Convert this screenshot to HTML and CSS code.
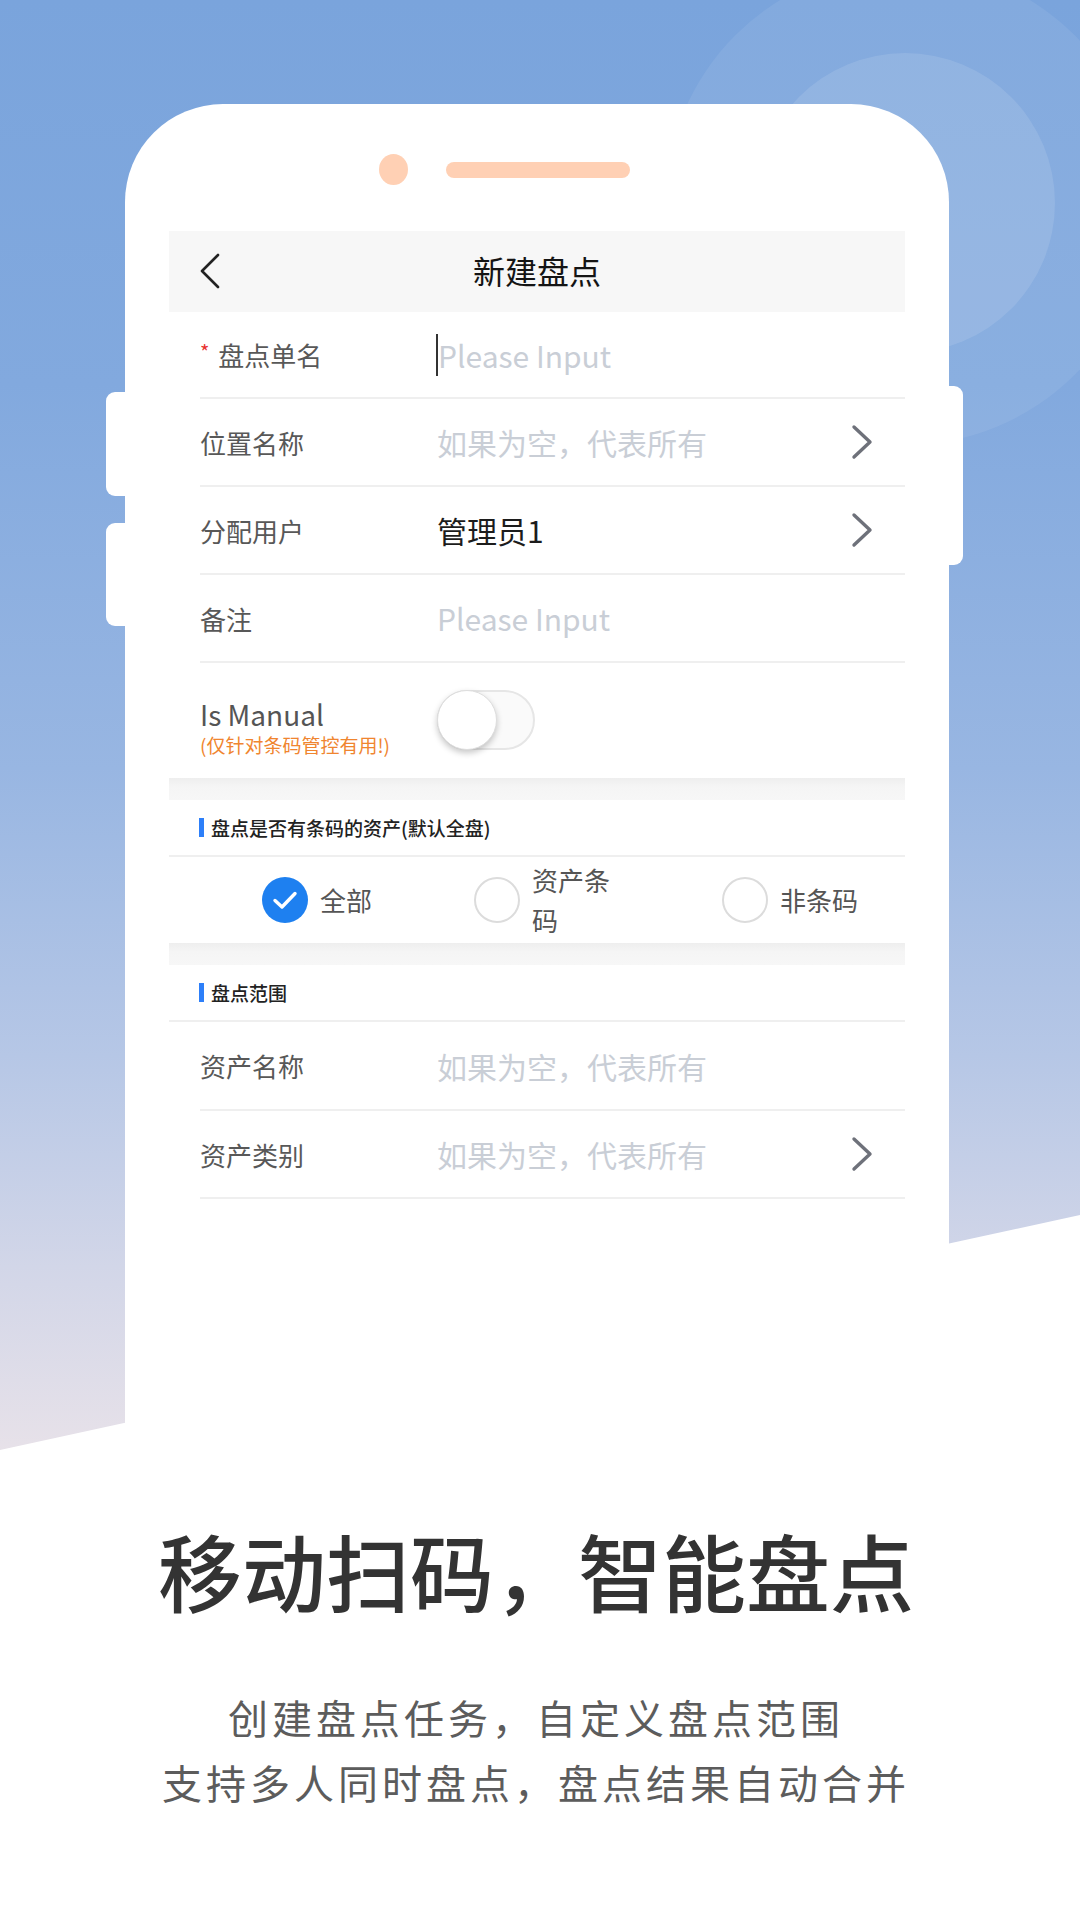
FILE: index.html
```html
<!DOCTYPE html>
<html lang="zh-CN">
<head>
<meta charset="utf-8">
<title>新建盘点</title>
<link rel="stylesheet" href="styles.css">
</head>
<body>
<div class="page">
  <div class="bg-circle outer"></div>
  <div class="bg-circle inner"></div>
  <div class="bg-white"></div>

  <div class="phone">
    <span class="side-btn left one"></span>
    <span class="side-btn left two"></span>
    <span class="side-btn right"></span>

    <div class="notch"><span class="cam"></span><span class="speaker"></span></div>

    <div class="screen">
      <div class="nav">
        <svg class="back" viewBox="0 0 22 36" width="22" height="36"><path d="M19 2 L3 18 L19 34" fill="none" stroke="#222" stroke-width="2.6" stroke-linecap="round" stroke-linejoin="round"/></svg>
        <div class="nav-title">新建盘点</div>
        <span></span>
      </div>

      <div class="row first">
        <div class="label"><span class="req">*</span>盘点单名</div>
        <div class="value placeholder"><span class="cursor"></span>Please Input</div>
      </div>
      <div class="row">
        <div class="label">位置名称</div>
        <div class="value placeholder">如果为空，代表所有</div>
        <svg class="chev" viewBox="0 0 24 38" width="24" height="38"><path d="M4 4 L20 19 L4 34" fill="none" stroke="#6E717A" stroke-width="3.4" stroke-linecap="round" stroke-linejoin="round"/></svg>
      </div>
      <div class="row">
        <div class="label">分配用户</div>
        <div class="value">管理员1</div>
        <svg class="chev" viewBox="0 0 24 38" width="24" height="38"><path d="M4 4 L20 19 L4 34" fill="none" stroke="#6E717A" stroke-width="3.4" stroke-linecap="round" stroke-linejoin="round"/></svg>
      </div>
      <div class="row">
        <div class="label">备注</div>
        <div class="value placeholder">Please Input</div>
      </div>
      <div class="row manual">
        <div class="label-block">
          <div class="label-en">Is Manual</div>
          <div class="label-note">(仅针对条码管控有用!)</div>
        </div>
        <div class="toggle"><span class="knob"></span></div>
      </div>

      <div class="band"></div>
      <div class="section-head"><span class="bar"></span>盘点是否有条码的资产(默认全盘)</div>
      <div class="radios">
        <div class="radio">
          <span class="dot checked"><svg viewBox="0 0 46 46" width="46" height="46"><path d="M13 23.5 L20 30 L33 16.5" fill="none" stroke="#fff" stroke-width="3.4" stroke-linecap="round" stroke-linejoin="round"/></svg></span>
          <span class="radio-text">全部</span>
        </div>
        <div class="radio">
          <span class="dot"></span>
          <span class="radio-text narrow">资产条码</span>
        </div>
        <div class="radio">
          <span class="dot"></span>
          <span class="radio-text">非条码</span>
        </div>
      </div>
      <div class="band"></div>
      <div class="section-head"><span class="bar"></span>盘点范围</div>
      <div class="row tall">
        <div class="label">资产名称</div>
        <div class="value placeholder">如果为空，代表所有</div>
      </div>
      <div class="row">
        <div class="label">资产类别</div>
        <div class="value placeholder">如果为空，代表所有</div>
        <svg class="chev" viewBox="0 0 24 38" width="24" height="38"><path d="M4 4 L20 19 L4 34" fill="none" stroke="#6E717A" stroke-width="3.4" stroke-linecap="round" stroke-linejoin="round"/></svg>
      </div>
    </div>
  </div>

  <div class="tagline">
    <h1 class="headline">移动扫码，智能盘点</h1>
    <p class="sub">创建盘点任务，自定义盘点范围</p>
    <p class="sub">支持多人同时盘点，盘点结果自动合并</p>
  </div>
</div>
</body>
</html>
```

FILE: styles.css
```css
* { box-sizing: border-box; }
html, body { margin: 0; padding: 0; }
body {
  width: 1080px;
  height: 1920px;
  overflow: hidden;
  font-family: "Noto Sans CJK SC", "Noto Sans", sans-serif;
}
.page {
  position: relative;
  width: 1080px;
  height: 1920px;
  overflow: hidden;
  background: linear-gradient(180deg, #7aa4dc 0%, #82a9de 20%, #98b6e2 40%, #b6c7e6 55%, #d2d6e8 66%, #e8e2e9 76%, #eee6ea 100%);
}
.bg-circle {
  position: absolute;
  border-radius: 50%;
  background: rgba(255, 255, 255, 0.07);
}
.bg-circle.outer { left: 665px; top: -35px; width: 480px; height: 480px; }
.bg-circle.inner { left: 755px; top: 53px; width: 300px; height: 300px; background: rgba(255, 255, 255, 0.11); }
.bg-white {
  position: absolute;
  inset: 0;
  background: #fff;
  clip-path: polygon(0 1450px, 1080px 1215px, 1080px 1920px, 0 1920px);
}

.phone {
  position: relative;
  z-index: 1;
  margin: 104px 0 0 125px;
  width: 824px;
  height: 1346px;
  padding-top: 50px;
  background: #fff;
  border-radius: 98px 98px 0 0;
}
.side-btn { position: absolute; background: #fff; }
.side-btn.left { left: -19px; width: 20px; border-radius: 9px 0 0 9px; }
.side-btn.left.one { top: 288px; height: 104px; }
.side-btn.left.two { top: 419px; height: 103px; }
.side-btn.right { right: -14px; top: 282px; width: 15px; height: 179px; border-radius: 0 9px 9px 0; }

.notch {
  display: flex;
  align-items: center;
  gap: 38px;
  height: 31px;
  padding-left: 254px;
}
.cam { width: 29px; height: 31px; border-radius: 50%; background: #ffd0b4; }
.speaker { width: 184px; height: 16px; border-radius: 8px; background: #ffd0b4; }

.screen {
  margin: 46px 0 0 44px;
  width: 736px;
  background: #fff;
}
.nav {
  height: 81px;
  background: #f7f7f7;
  display: grid;
  grid-template-columns: 1fr auto 1fr;
  align-items: center;
  padding-left: 30px;
}
.back { display: block; margin-top: -2px; }
.nav-title { font-size: 32px; color: #141414; line-height: 40px; padding-right: 30px; margin-top: -4px; }

.row {
  display: flex;
  align-items: center;
  height: 88px;
  margin-left: 31px;
  padding-right: 31px;
  border-bottom: 2px solid #efefef;
}
.row.first { height: 87px; }
.row.tall { height: 89px; }
.label {
  width: 237px;
  flex: none;
  font-size: 26px;
  color: #585858;
  display: flex;
  align-items: center;
}
.req { color: #e8322f; font-size: 20px; margin-right: 9px; line-height: 20px; margin-top: -6px; }
.value {
  flex: 1;
  font-size: 30px;
  color: #1c1c1c;
  display: flex;
  align-items: center;
  white-space: nowrap;
}
.value.placeholder { color: #c9ced6; }
.cursor { display: inline-block; width: 2px; height: 42px; background: #333; margin-left: -1px; margin-right: 0; }
.chev { display: block; flex: none; }

.row.manual {
  height: 115px;
  margin-left: 0;
  padding-left: 31px;
  border-bottom: none;
}
.label-block { width: 237px; flex: none; padding-top: 12px; }
.label-en { font-size: 28px; line-height: 34px; color: #555; }
.label-note { font-size: 19px; line-height: 24px; margin-top: 2px; color: #f0852f; }
.toggle {
  position: relative;
  width: 98px;
  height: 60px;
  border-radius: 30px;
  border: 2px solid #e6e6e6;
  background: #fafafa;
  margin-top: -2px;
}
.knob {
  position: absolute;
  left: -2px;
  top: -2px;
  width: 60px;
  height: 60px;
  border-radius: 50%;
  background: #fff;
  border: 1px solid #dedede;
  box-shadow: 0 3px 6px rgba(0, 0, 0, 0.22);
}

.band {
  height: 22px;
  background: linear-gradient(180deg, #eeeeee 0%, #f5f5f5 40%, #f7f7f7 100%);
}
.section-head {
  height: 57px;
  display: flex;
  align-items: center;
  padding-left: 30px;
  font-size: 19px;
  font-weight: 500;
  color: #222;
  border-bottom: 2px solid #efefef;
}
.bar { width: 5px; height: 19px; background: #2d7ff9; margin-right: 7px; }

.radios {
  height: 86px;
  display: grid;
  grid-template-columns: 212px 248px auto;
  align-items: center;
  padding-left: 93px;
}
.radio { display: flex; align-items: center; gap: 12px; }
.dot {
  width: 46px;
  height: 46px;
  border-radius: 50%;
  border: 2px solid #dcdcdc;
  flex: none;
  background: #fff;
}
.dot.checked { border: none; background: #1e80f0; }
.dot svg { display: block; }
.radio-text { font-size: 26px; color: #555; line-height: 40px; }
.radio-text.narrow { width: 3em; }

.tagline {
  position: relative;
  z-index: 1;
  text-align: center;
  padding-right: 8px;
}
.headline {
  margin: 70px 0 0;
  font-size: 84px;
  line-height: 100px;
  font-weight: 500;
  color: #333;
}
.sub {
  margin: 0;
  font-size: 40px;
  line-height: 65px;
  letter-spacing: 4px;
  color: #5c5c5c;
}
.headline + .sub { margin-top: 65px; }
```
